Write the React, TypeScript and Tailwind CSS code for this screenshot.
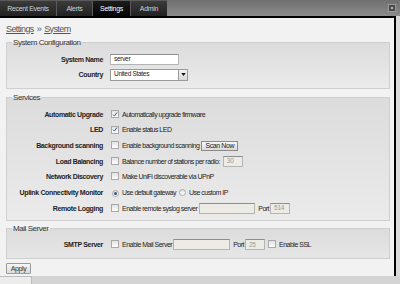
import React from "react";

const Check = ({ checked }: { checked?: boolean }) => (
  <span className="inline-flex h-[8px] w-[8px] shrink-0 items-center justify-center border border-[#a8a8a8] bg-gradient-to-b from-[#e2e2e2] to-white">
    {checked && (
      <svg viewBox="0 0 8 8" className="h-[7px] w-[7px]">
        <path d="M1.4 4.2 L3.2 6.1 L6.6 1.4" stroke="#34508a" strokeWidth="1.3" fill="none" />
      </svg>
    )}
  </span>
);

const Radio = ({ checked }: { checked?: boolean }) => (
  <span className="inline-flex h-[7px] w-[7px] shrink-0 items-center justify-center rounded-full border border-[#a8a8a8] bg-gradient-to-b from-[#e2e2e2] to-white">
    {checked && <span className="h-[3px] w-[3px] rounded-full bg-[#2f4f86]" />}
  </span>
);

const Row = ({ label, children, tall }: { label: string; children: React.ReactNode; tall?: boolean }) => (
  <div className={tall ? "flex h-[15px] items-center whitespace-nowrap" : "flex h-[15.67px] items-center whitespace-nowrap"}>
    <div className="w-[96px] shrink-0 text-right text-[7px] font-bold tracking-[-0.35px] text-[#222]">{label}</div>
    <div className="ml-[7px] flex items-center">{children}</div>
  </div>
);

const Input = ({ value, w, disabled }: { value?: string; w: string; disabled?: boolean }) => (
  <div
    className={
      (disabled ? "bg-[#ecebe5] text-[#9a9a9a] " : "bg-white text-[#222] ") +
      w +
      " flex h-[11px] items-center border border-[#b4b4b4] border-t-[#8e8e8e] px-[3px] text-[6.5px] leading-none tracking-[-0.3px]"
    }
  >
    {value}
  </div>
);

const Tab = ({ label, w, active }: { label: string; w: string; active?: boolean }) => (
  <div
    className={
      w +
      (active
        ? " bg-gradient-to-b from-[#1c1c1c] to-[#050505] text-white"
        : " bg-gradient-to-b from-[#3c3c3c] to-[#222] text-[#d2d2d2]") +
      " flex h-[15px] items-center justify-center text-[7px] leading-none tracking-[-0.3px]"
    }
  >
    {label}
  </div>
);

const Legend = ({ children }: { children: React.ReactNode }) => (
  <legend className="ml-[5px] px-[1px] text-[8px] leading-[9px] tracking-[-0.45px] text-[#333]">{children}</legend>
);

const T = ({ children, cls }: { children: React.ReactNode; cls?: string }) => (
  <span className={"text-[7px] tracking-[-0.5px] " + (cls ?? "ml-[3px]")}>{children}</span>
);

export default function App() {
  return (
    <div className="flex h-[284px] w-[400px] flex-col overflow-hidden bg-[#d4d4d4] font-['Liberation_Sans',Arial,sans-serif] text-[7px] leading-none text-[#222]">
      {/* top bar */}
      <div className="flex h-[16px] shrink-0 items-end bg-gradient-to-b from-[#6f6f6f] to-[#8c8c8c]">
        <div className="flex h-[16px] items-end gap-[1px] bg-[#5a5a5a]">
          <Tab label="Recent Events" w="w-[56px]" />
          <Tab label="Alerts" w="w-[35px]" />
          <Tab label="Settings" w="w-[37px]" active />
          <Tab label="Admin" w="w-[36px]" />
        </div>
        <div className="mb-[4px] ml-auto mr-[4px] flex h-[8px] w-[8px] items-center justify-center border border-[#9a9a9a] bg-[#4a4a4a]">
          <span className="h-[2px] w-[2px] bg-[#bbb]" />
        </div>
      </div>

      {/* main */}
      <div className="flex h-[260px] shrink-0">
        <div className="flex w-[396px] flex-col border-r-2 border-t-2 border-black bg-[#f2f2f2] pl-[6px] pr-[4px]">
          <div className="mt-[5px] flex h-[12px] items-center text-[9px] tracking-[-0.6px] text-[#555]">
            <span className="underline">Settings</span>
            <span className="mx-[3px]">»</span>
            <span className="underline">System</span>
          </div>

          <fieldset className="mt-[3px] border border-[#cfcfcf] bg-gradient-to-b from-[#dcdcdc] to-[#ebebeb] pb-[6px] pt-[5px]">
            <Legend>System Configuration</Legend>
            <Row label="System Name" tall>
              <Input value="server" w="w-[69px]" />
            </Row>
            <Row label="Country" tall>
              <div className="flex h-[12px] w-[78px] items-center border border-[#9a9a9a] bg-white">
                <span className="flex-1 pl-[3px] text-[6.5px] tracking-[-0.3px]">United States</span>
                <span className="flex h-[10px] w-[9px] items-center justify-center border-l border-[#9a9a9a] bg-gradient-to-b from-[#f4f4f4] to-[#d8d8d8]">
                  <svg viewBox="0 0 6 4" className="h-[3px] w-[5px]">
                    <path d="M0 0 L6 0 L3 4 Z" fill="#111" />
                  </svg>
                </span>
              </div>
            </Row>
          </fieldset>

          <fieldset className="mt-[4px] border border-[#cfcfcf] bg-gradient-to-b from-[#dcdcdc] to-[#ebebeb] pb-[4px] pt-[4.5px]">
            <Legend>Services</Legend>
            <Row label="Automatic Upgrade">
              <span className="ml-[1px]"><Check checked /></span>
              <T>Automatically upgrade firmware</T>
            </Row>
            <Row label="LED">
              <span className="ml-[1px]"><Check checked /></span>
              <T>Enable status LED</T>
            </Row>
            <Row label="Background scanning">
              <span className="ml-[1px]"><Check /></span>
              <T>Enable background scanning</T>
              <button className="ml-[2px] flex h-[10px] w-[37px] items-center justify-center border border-[#8a8a8a] bg-gradient-to-b from-[#f6f6f6] to-[#dadada] text-[7px] leading-none tracking-[-0.4px] text-[#222]">
                Scan Now
              </button>
            </Row>
            <Row label="Load Balancing">
              <span className="ml-[1px]"><Check /></span>
              <T cls="ml-[3px] mr-[3px]">Balance number of stations per radio:</T>
              <Input value="30" w="w-[20px]" disabled />
            </Row>
            <Row label="Network Discovery">
              <span className="ml-[1px]"><Check /></span>
              <T>Make UniFi discoverable via UPnP</T>
            </Row>
            <Row label="Uplink Connectivity Monitor">
              <span className="ml-[2px]"><Radio checked /></span>
              <T>Use default gateway</T>
              <span className="ml-[3px]"><Radio /></span>
              <T>Use custom IP</T>
            </Row>
            <Row label="Remote Logging">
              <span className="ml-[1px]"><Check /></span>
              <T cls="ml-[3px] mr-[2px]">Enable remote syslog server</T>
              <Input w="w-[56px]" disabled />
              <T cls="ml-[3px] mr-[1px]">Port</T>
              <Input value="514" w="w-[20px]" disabled />
            </Row>
          </fieldset>

          <fieldset className="mt-[2.5px] border border-[#cfcfcf] bg-gradient-to-b from-[#dcdcdc] to-[#e6e6e6] pb-[5px] pt-[4.5px]">
            <Legend>Mail Server</Legend>
            <Row label="SMTP Server">
              <span className="ml-[1px]"><Check /></span>
              <T cls="ml-[3px] mr-[1px]">Enable Mail Server</T>
              <Input w="w-[57px]" disabled />
              <T cls="ml-[3px] mr-[1px]">Port</T>
              <Input value="25" w="w-[20px]" disabled />
              <span className="ml-[3px]"><Check /></span>
              <T>Enable SSL</T>
            </Row>
          </fieldset>

          <div className="mt-[4px]">
            <button className="flex h-[11px] w-[25px] items-center justify-center rounded-[1px] border border-[#9a9a9a] bg-gradient-to-b from-[#f6f6f6] to-[#dcdcdc] text-[7px] leading-none tracking-[-0.4px] text-[#333]">
              Apply
            </button>
          </div>
        </div>
        <div className="flex-1 bg-[#d9d9d9]" />
      </div>

      {/* bottom strip */}
      <div className="flex flex-1 bg-[#d4d4d4]">
        <div className="w-[32px] border-r border-t border-[#bdbdbd] bg-[#ececec]" />
      </div>
    </div>
  );
}
